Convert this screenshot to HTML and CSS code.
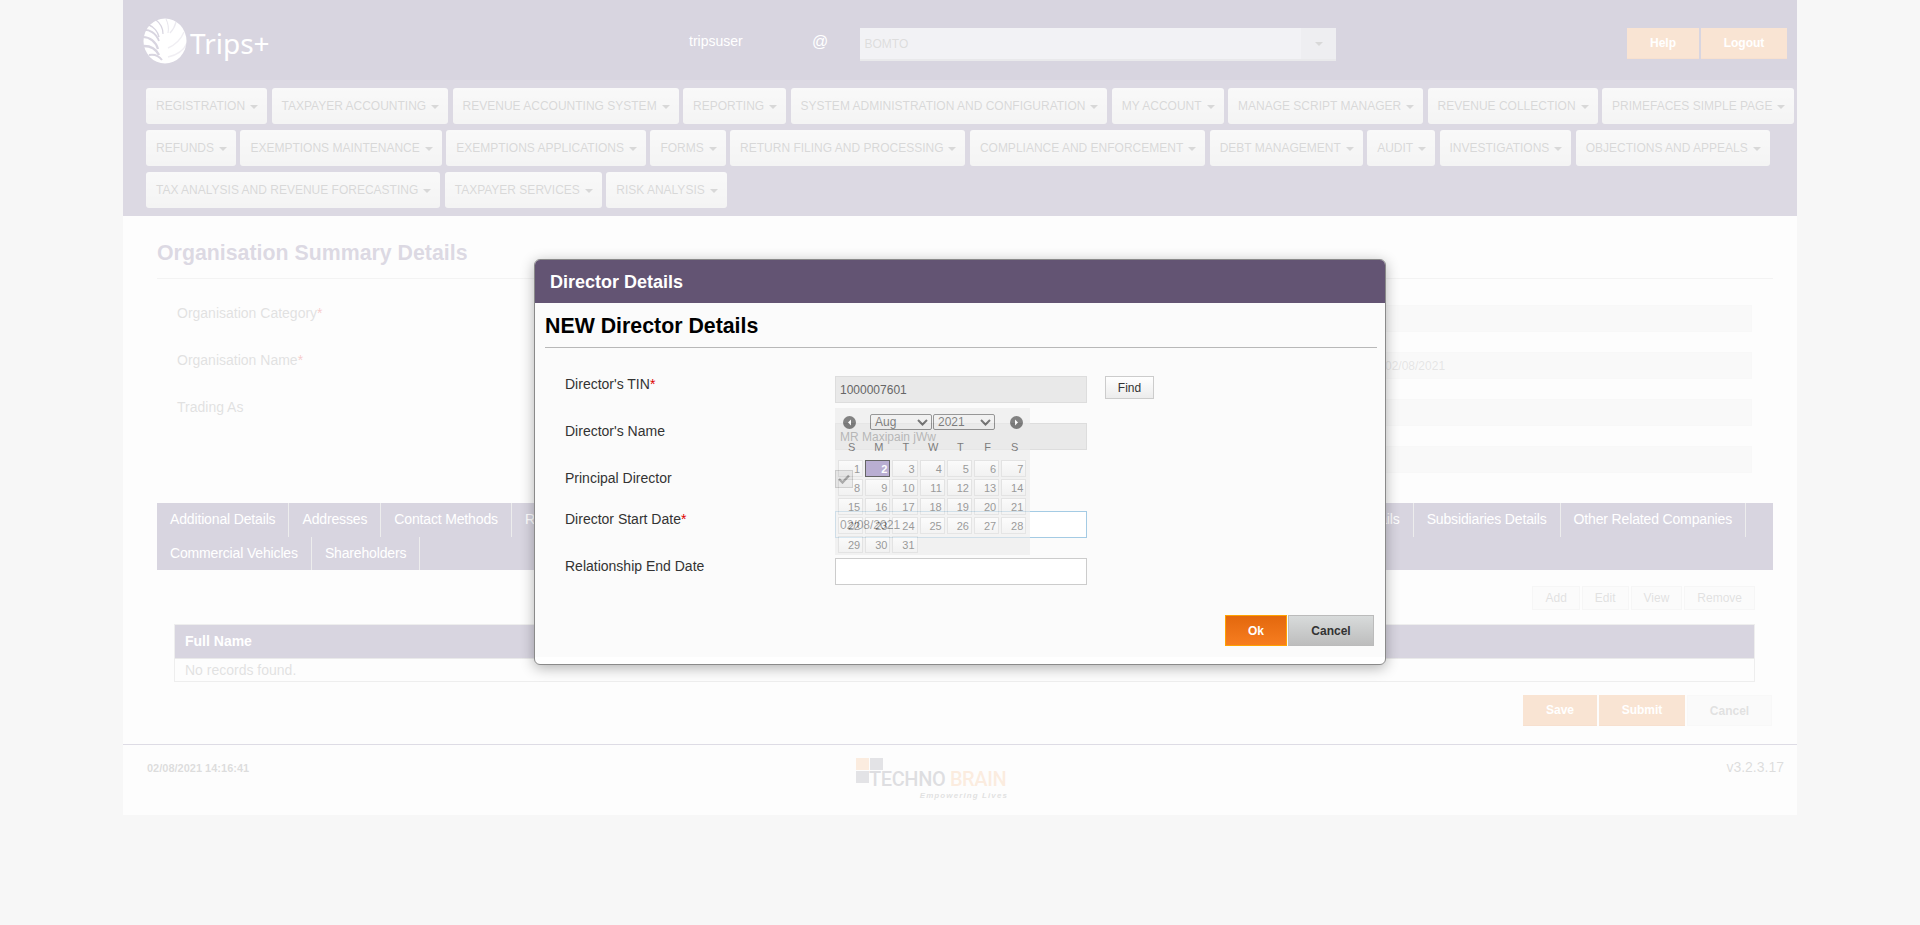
FILE: index.html
```html
<!DOCTYPE html>
<html lang="en">
<head>
  <meta charset="UTF-8">
  <title>Trips+ | Organisation Summary Details</title>
  <link rel="stylesheet" href="styles.css">
</head>
<body>
  <div class="wrapper">
    <div class="header">
      <div class="brand">
        <svg class="globe" width="44" height="46" viewBox="0 0 44 46">
          <ellipse cx="22" cy="23" rx="21.500" ry="22.500" fill="#fff"/>
          <g fill="none" stroke="#635783">
            <path stroke-width="1.800" d="M0 12c6-1 13 3 16 11"/>
            <path stroke-width="2.200" d="M0 19c7 0 13 5 15 12"/>
            <path stroke-width="2.400" d="M1 28c6 0 12 3 15 9"/>
            <path stroke-width="2" d="M6 37c5-1 10 1 13 5"/>
            <path stroke-width="1.400" d="M6 7c5 2 9 7 10 12"/>
            <path stroke-width="1.200" d="M13 2c4 3 7 8 7 14"/>
            <path stroke-width="1" stroke-opacity="0.6" d="M23 1c2 4 3 9 2 14"/>
            <path stroke-width="1.200" stroke-opacity="0.5" d="M33 4c-1 4-3 8-6 11"/>
            <path stroke-width="1.400" stroke-opacity="0.4" d="M41 14c-3 7-9 13-16 16"/>
            <path stroke-width="1.400" stroke-opacity="0.4" d="M44 25c-3 7-10 12-19 14"/>
          </g>
        </svg>
        <span class="brand-name">Trips+</span>
      </div>
      <div class="user">tripsuser</div>
      <div class="at">@</div>
      <div class="org-select">
        <span class="org-value">BOMTO</span>
        <span class="org-arrow"><i class="caret"></i></span>
      </div>
      <div class="header-btns">
        <a class="btn-orange btn-help">Help</a>
        <a class="btn-orange btn-logout">Logout</a>
      </div>
    </div>

    <div class="nav">
      <div class="nav-row">
        <a class="menu">REGISTRATION<i class="caret"></i></a>
        <a class="menu">TAXPAYER ACCOUNTING<i class="caret"></i></a>
        <a class="menu">REVENUE ACCOUNTING SYSTEM<i class="caret"></i></a>
        <a class="menu">REPORTING<i class="caret"></i></a>
        <a class="menu">SYSTEM ADMINISTRATION AND CONFIGURATION<i class="caret"></i></a>
        <a class="menu">MY ACCOUNT<i class="caret"></i></a>
        <a class="menu">MANAGE SCRIPT MANAGER<i class="caret"></i></a>
        <a class="menu">REVENUE COLLECTION<i class="caret"></i></a>
        <a class="menu">PRIMEFACES SIMPLE PAGE<i class="caret"></i></a>
      </div>
      <div class="nav-row">
        <a class="menu">REFUNDS<i class="caret"></i></a>
        <a class="menu">EXEMPTIONS MAINTENANCE<i class="caret"></i></a>
        <a class="menu">EXEMPTIONS APPLICATIONS<i class="caret"></i></a>
        <a class="menu">FORMS<i class="caret"></i></a>
        <a class="menu">RETURN FILING AND PROCESSING<i class="caret"></i></a>
        <a class="menu">COMPLIANCE AND ENFORCEMENT<i class="caret"></i></a>
        <a class="menu">DEBT MANAGEMENT<i class="caret"></i></a>
        <a class="menu">AUDIT<i class="caret"></i></a>
        <a class="menu">INVESTIGATIONS<i class="caret"></i></a>
        <a class="menu">OBJECTIONS AND APPEALS<i class="caret"></i></a>
      </div>
      <div class="nav-row">
        <a class="menu">TAX ANALYSIS AND REVENUE FORECASTING<i class="caret"></i></a>
        <a class="menu">TAXPAYER SERVICES<i class="caret"></i></a>
        <a class="menu">RISK ANALYSIS<i class="caret"></i></a>
      </div>
    </div>

    <div class="main">
      <h2 class="page-title">Organisation Summary Details</h2>

      <div class="summary">
        <div class="summary-row">
          <label>Organisation Category<span class="req">*</span></label>
          <div class="box"></div>
        </div>
        <div class="summary-row">
          <label>Organisation Name<span class="req">*</span></label>
          <div class="box">02/08/2021</div>
        </div>
        <div class="summary-row">
          <label>Trading As</label>
          <div class="box"></div>
        </div>
        <div class="summary-row">
          <label></label>
          <div class="box"></div>
        </div>
      </div>

      <div class="tabs">
        <div class="tab-row">
          <a class="tab">Additional Details</a>
          <a class="tab">Addresses</a>
          <a class="tab">Contact Methods</a>
          <a class="tab tab-grow">Related Parties</a>
          <a class="tab">Directors Details</a>
          <a class="tab">Subsidiaries Details</a>
          <a class="tab">Other Related Companies</a>
        </div>
        <div class="tab-row">
          <a class="tab">Commercial Vehicles</a>
          <a class="tab">Shareholders</a>
        </div>
      </div>

      <div class="toolbar">
        <a class="tool-btn">Add</a>
        <a class="tool-btn">Edit</a>
        <a class="tool-btn">View</a>
        <a class="tool-btn">Remove</a>
      </div>

      <div class="grid">
        <div class="grid-head">Full Name</div>
        <div class="grid-empty">No records found.</div>
      </div>

      <div class="actions">
        <a class="btn-orange btn-save">Save</a>
        <a class="btn-orange btn-submit">Submit</a>
        <a class="btn-plain">Cancel</a>
      </div>
    </div>

    <div class="footer">
      <div class="stamp">02/08/2021 14:16:41</div>
      <div class="tb-logo">
        <i class="sq sq-orange"></i><i class="sq"></i>
        <i class="sq"></i><span class="tb-name">TECHNO <b>BRAIN</b></span>
        <span class="tb-tag">Empowering Lives</span>
      </div>
      <div class="version">v3.2.3.17</div>
    </div>
  </div>

  <div class="mask"></div>

  <div class="dialog">
    <div class="dialog-title">Director Details</div>
    <div class="dialog-body">
      <h3 class="dialog-heading">NEW Director Details</h3>

      <div class="dlg-row">
        <label>Director's TIN<span class="req-strong">*</span></label>
        <div class="dlg-input disabled">1000007601</div>
        <a class="find-btn">Find</a>
      </div>
      <div class="dlg-row">
        <label>Director's Name</label>
        <div class="dlg-input disabled">MR Maxipain jWw</div>
      </div>
      <div class="dlg-row dlg-row-check">
        <label>Principal Director</label>
        <div class="check">
          <svg width="12" height="10" viewBox="0 0 12 10"><path d="M1 5l3.500 3.500L11 1.500" fill="none" stroke="#333" stroke-width="2.400"/></svg>
        </div>
      </div>
      <div class="dlg-row">
        <label>Director Start Date<span class="req-strong">*</span></label>
        <div class="dlg-input focused">02/08/2021</div>
      </div>
      <div class="dlg-row">
        <label>Relationship End Date</label>
        <div class="dlg-input"></div>
      </div>

      <div class="dlg-actions">
        <a class="ok-btn">Ok</a>
        <a class="cancel-btn">Cancel</a>
      </div>
    </div>

    <div class="datepicker">
      <div class="dp-head">
        <svg class="dp-nav" width="13" height="13" viewBox="0 0 13 13"><circle cx="6.500" cy="6.500" r="6.500" fill="#333"/><path d="M8 3.500L5 6.500l3 3z" fill="#fff"/></svg>
        <span class="dp-select dp-month">Aug<svg width="11" height="7" viewBox="0 0 11 7"><path d="M1 1l4.500 4.500L10 1" fill="none" stroke="#222" stroke-width="2"/></svg></span>
        <span class="dp-select dp-year">2021<svg width="11" height="7" viewBox="0 0 11 7"><path d="M1 1l4.500 4.500L10 1" fill="none" stroke="#222" stroke-width="2"/></svg></span>
        <svg class="dp-nav" width="13" height="13" viewBox="0 0 13 13"><circle cx="6.500" cy="6.500" r="6.500" fill="#333"/><path d="M5 3.500l3 3-3 3z" fill="#fff"/></svg>
      </div>
      <div class="dp-days">
        <span>S</span><span>M</span><span>T</span><span>W</span><span>T</span><span>F</span><span>S</span>
      </div>
      <div class="dp-cells">
        <a>1</a><a class="on">2</a><a>3</a><a>4</a><a>5</a><a>6</a><a>7</a>
        <a>8</a><a>9</a><a>10</a><a>11</a><a>12</a><a>13</a><a>14</a>
        <a>15</a><a>16</a><a>17</a><a>18</a><a>19</a><a>20</a><a>21</a>
        <a>22</a><a>23</a><a>24</a><a>25</a><a>26</a><a>27</a><a>28</a>
        <a>29</a><a>30</a><a>31</a>
      </div>
    </div>
  </div>
</body>
</html>
```

FILE: styles.css
```css
body {
  margin: 0;
  min-height: 925px;
  background: #dedede;
  font-family: "Liberation Sans", Arial, sans-serif;
  font-size: 14px;
  color: #555;
}
a { display: block; }
.wrapper {
  width: 1674px;
  margin: 0 auto;
  background: #f6f6f6;
}

/* top bar */
.header {
  height: 80px;
  background: #635783;
  display: flex;
  padding: 0 10px 0 20px;
  box-sizing: border-box;
}
.brand {
  width: 546px;
  display: flex;
  padding-top: 18px;
  box-sizing: border-box;
}
.brand-name {
  margin: 5px 0 0 3px;
  font-family: "Noto Sans", sans-serif;
  font-size: 28px;
  line-height: 40px;
  color: #fff;
}
.user {
  width: 123px;
  padding-top: 33px;
  color: #fff;
  line-height: 16px;
}
.at {
  width: 47.500px;
  padding-top: 33px;
  font-size: 16px;
  line-height: 18px;
  color: #fff;
}
.org-select {
  width: 476.500px;
  height: 33px;
  margin-top: 28px;
  display: flex;
  background: #cccbd6;
  border-bottom: 2px solid #a9a9b0;
  box-sizing: border-box;
}
.org-value {
  flex: 1;
  padding: 8px 5px;
  font-size: 12px;
  line-height: 16px;
  color: #777;
}
.org-arrow {
  width: 35px;
  background: #bdbcc8;
  display: flex;
  align-items: center;
  justify-content: center;
}
.caret {
  display: inline-block;
  width: 0;
  height: 0;
  margin-left: 5px;
  border-top: 4px solid #666;
  border-left: 4px solid transparent;
  border-right: 4px solid transparent;
  vertical-align: middle;
}
.org-arrow .caret { margin-left: 0; }
.header-btns {
  margin-left: auto;
  margin-top: 28px;
  display: flex;
  gap: 2px;
}
.btn-orange {
  height: 31px;
  line-height: 30px;
  box-sizing: border-box;
  text-align: center;
  font-size: 12px;
  font-weight: bold;
  color: #fff;
  background: #e7934f;
  border-bottom: 1px solid #dd8440;
}
.btn-help { width: 72px; }
.btn-logout { width: 86px; }

/* menu */
.nav {
  height: 136px;
  background: #73678f;
  padding: 8px 0 0 23px;
  box-sizing: border-box;
}
.nav-row {
  display: flex;
  gap: 4.400px;
  margin-bottom: 6px;
}
.menu {
  height: 36px;
  line-height: 36px;
  padding: 0 9px 0 10px;
  font-size: 12px;
  white-space: nowrap;
  color: #666;
  background: linear-gradient(#e6e6e6, #d2d2d2);
  border-radius: 3px;
}

/* page body */
.main {
  padding: 0 24px 0 34px;
}
.page-title {
  margin: 0;
  height: 63px;
  box-sizing: border-box;
  padding-top: 27px;
  font-size: 21.330px;
  line-height: 20px;
  color: #73678f;
  border-bottom: 1px solid #d0d0d0;
}
.summary {
  padding: 26px 21px 0 20px;
}
.summary-row {
  display: flex;
  justify-content: space-between;
  height: 27px;
  margin-bottom: 20px;
}
.summary-row label {
  line-height: 16px;
  color: #888;
}
.req { color: #d33; }
.box {
  width: 373px;
  height: 27px;
  line-height: 27px;
  padding-left: 5px;
  box-sizing: border-box;
  font-size: 12px;
  color: #999;
  background: #e8e8e8;
  border: 1px solid #e2e2e2;
}
.tabs {
  margin-top: 30px;
  background: #635783;
}
.tab-row {
  display: flex;
  height: 34px;
  padding-right: 27px;
}
.tab-row + .tab-row { height: 33px; }
.tab {
  padding: 0 13px;
  line-height: 32px;
  letter-spacing: -0.150px;
  color: #fff;
  border-right: 1px solid #b8b8b8;
  white-space: nowrap;
}
.tab-grow { flex: 1; }
.toolbar {
  display: flex;
  justify-content: flex-end;
  gap: 2px;
  margin: 16px 18px 14px 0;
}
.tool-btn {
  height: 24px;
  line-height: 23px;
  padding: 0 12px;
  box-sizing: border-box;
  font-size: 12px;
  color: #888;
  background: #eee;
  border: 1px solid #dcdcdc;
}
.grid {
  margin: 0 18px 0 17px;
  border: 1px solid #bbb;
}
.grid-head {
  height: 33px;
  line-height: 33px;
  padding-left: 10px;
  font-weight: bold;
  color: #fff;
  background: #635783;
  border-bottom: 1px solid #aaa;
}
.grid-empty {
  height: 22px;
  line-height: 22px;
  padding-left: 10px;
  color: #888;
}
.actions {
  display: flex;
  justify-content: flex-end;
  gap: 2px;
  margin: 13px 1px 18px 0;
}
.btn-save { width: 74px; }
.btn-submit { width: 86px; }
.btn-plain {
  width: 85px;
  height: 31px;
  line-height: 30px;
  box-sizing: border-box;
  text-align: center;
  font-size: 12px;
  font-weight: bold;
  color: #888;
  background: #ececec;
  border: 1px solid #e4e4e4;
}

/* footer */
.footer {
  height: 71px;
  display: grid;
  grid-template-columns: 709px 152px 1fr;
  padding: 0 13px 0 24px;
  box-sizing: border-box;
  border-top: 1px solid #7d7397;
}
.stamp {
  padding-top: 17px;
  font-size: 11px;
  font-weight: bold;
  line-height: 13px;
  color: #777;
}
.tb-logo {
  display: grid;
  grid-template-columns: 13px 13px 1fr;
  grid-auto-rows: min-content;
  column-gap: 1px;
  row-gap: 1px;
  padding-top: 13px;
}
.sq {
  width: 13px;
  height: 12px;
  background: #8f8f9c;
}
.sq-orange { background: #eeb27f; }
.tb-logo .sq:nth-child(2) { grid-column: 2 / 4; }
.tb-name {
  grid-column: 2 / 4;
  margin-left: -1px;
  font-family: "Roboto", sans-serif;
  font-size: 20px;
  font-weight: 500;
  line-height: 17px;
  height: 14px;
  letter-spacing: -0.400px;
  white-space: nowrap;
  color: #7c7c86;
}
.tb-name b {
  font-weight: 500;
  color: #eeb27f;
}
.tb-tag {
  grid-column: 1 / 4;
  margin-top: 5px;
  text-align: right;
  font-size: 8px;
  line-height: 9px;
  font-style: italic;
  font-weight: bold;
  letter-spacing: 1.100px;
  color: #888;
}
.version {
  justify-self: end;
  padding-top: 14px;
  line-height: 16px;
  color: #777;
}

/* modal */
.mask {
  position: fixed;
  left: 0;
  top: 0;
  right: 0;
  bottom: 0;
  background: rgba(255, 255, 255, 0.75);
}
.dialog {
  position: fixed;
  left: 534px;
  top: 259px;
  width: 852px;
  height: 406px;
  box-sizing: border-box;
  background: #fff;
  border: 1px solid #8a8a8a;
  border-radius: 6px;
  box-shadow: 0 3px 14px rgba(0, 0, 0, 0.3);
  color: #333;
}
.dialog-title {
  height: 43px;
  line-height: 44px;
  padding-left: 15px;
  font-size: 18px;
  font-weight: bold;
  color: #fff;
  background: #635473;
  border-radius: 5px 5px 0 0;
}
.dialog-body {
  height: 354px;
  box-sizing: border-box;
  padding: 0 8px 0 10px;
  background: #fbfbfb;
}
.dialog-heading {
  margin: 0 0 28px;
  height: 45px;
  line-height: 46px;
  box-sizing: border-box;
  font-size: 21.330px;
  color: #000;
  border-bottom: 1px solid #b8b8b8;
}
.dlg-row {
  display: flex;
  height: 27px;
  margin-bottom: 20px;
}
.dlg-row-check { height: 21px; }
.dlg-row label {
  width: 270px;
  margin-left: 20px;
  line-height: 17px;
}
.req-strong { color: #d00; }
.dlg-input {
  width: 252px;
  height: 27px;
  line-height: 27px;
  padding-left: 4px;
  box-sizing: border-box;
  font-size: 12px;
  color: #222;
  background: #fff;
  border: 1px solid #ccc;
}
.dlg-input.disabled {
  background: #e9e9e9;
  border-color: #ddd;
  color: #666;
}
.dlg-input.focused { border-color: #a4cbe4; }
.find-btn {
  width: 49px;
  height: 23px;
  margin-left: 18px;
  line-height: 23px;
  box-sizing: border-box;
  text-align: center;
  font-size: 12px;
  color: #333;
  background: linear-gradient(#fff, #ececec);
  border: 1px solid #ccc;
}
.check {
  width: 18px;
  height: 18px;
  box-sizing: border-box;
  display: flex;
  align-items: center;
  justify-content: center;
  background: #d8d8d8;
  border: 1px solid #999;
}
.dlg-actions {
  display: flex;
  justify-content: flex-end;
  gap: 1px;
  margin: 30px 3px 0 0;
}
.ok-btn, .cancel-btn {
  height: 31px;
  line-height: 30px;
  box-sizing: border-box;
  text-align: center;
  font-size: 12px;
  font-weight: bold;
}
.ok-btn {
  width: 62px;
  color: #fff;
  background: linear-gradient(#e3680e, #f77d1f);
  border: 1px solid #ffa200;
}
.cancel-btn {
  width: 86px;
  color: #333;
  background: linear-gradient(#d8dbdb, #bdbdbd);
  border: 1px solid #bbb;
}

/* calendar popup, still fading in */
.datepicker {
  position: absolute;
  left: 300px;
  top: 148px;
  width: 195px;
  height: 147px;
  box-sizing: border-box;
  padding: 6px 3px 0;
  background: #ececec;
  opacity: 0.6;
}
.dp-head {
  display: flex;
  align-items: center;
  height: 16px;
}
.dp-nav { margin: 0 0 0 5px; }
.dp-nav:last-child { margin-left: 15px; }
.dp-select {
  height: 16px;
  box-sizing: border-box;
  display: flex;
  align-items: center;
  justify-content: space-between;
  padding: 0 3px 0 4px;
  font-size: 12px;
  color: #333;
  border: 1px solid #555;
  border-radius: 2px;
}
.dp-month { width: 62px; margin-left: 14px; }
.dp-year { width: 62px; margin-left: 1px; }
.dp-days {
  display: grid;
  grid-template-columns: repeat(7, 27.200px);
  margin-top: 10px;
  height: 15px;
  line-height: 15px;
  text-align: center;
  font-size: 11px;
  color: #333;
}
.dp-cells {
  display: grid;
  grid-template-columns: repeat(7, 25.200px);
  grid-auto-rows: 17px;
  gap: 2px;
  margin-top: 5px;
}
.dp-cells a {
  padding-right: 2px;
  line-height: 16px;
  box-sizing: border-box;
  text-align: right;
  font-size: 11px;
  color: #585858;
  background: linear-gradient(#fbfbfb, #ececec);
  border: 1px solid #d4d4d4;
}
.dp-cells a.on {
  font-weight: bold;
  color: #fff;
  background: #8e7bb7;
  border-color: #000;
}
```
